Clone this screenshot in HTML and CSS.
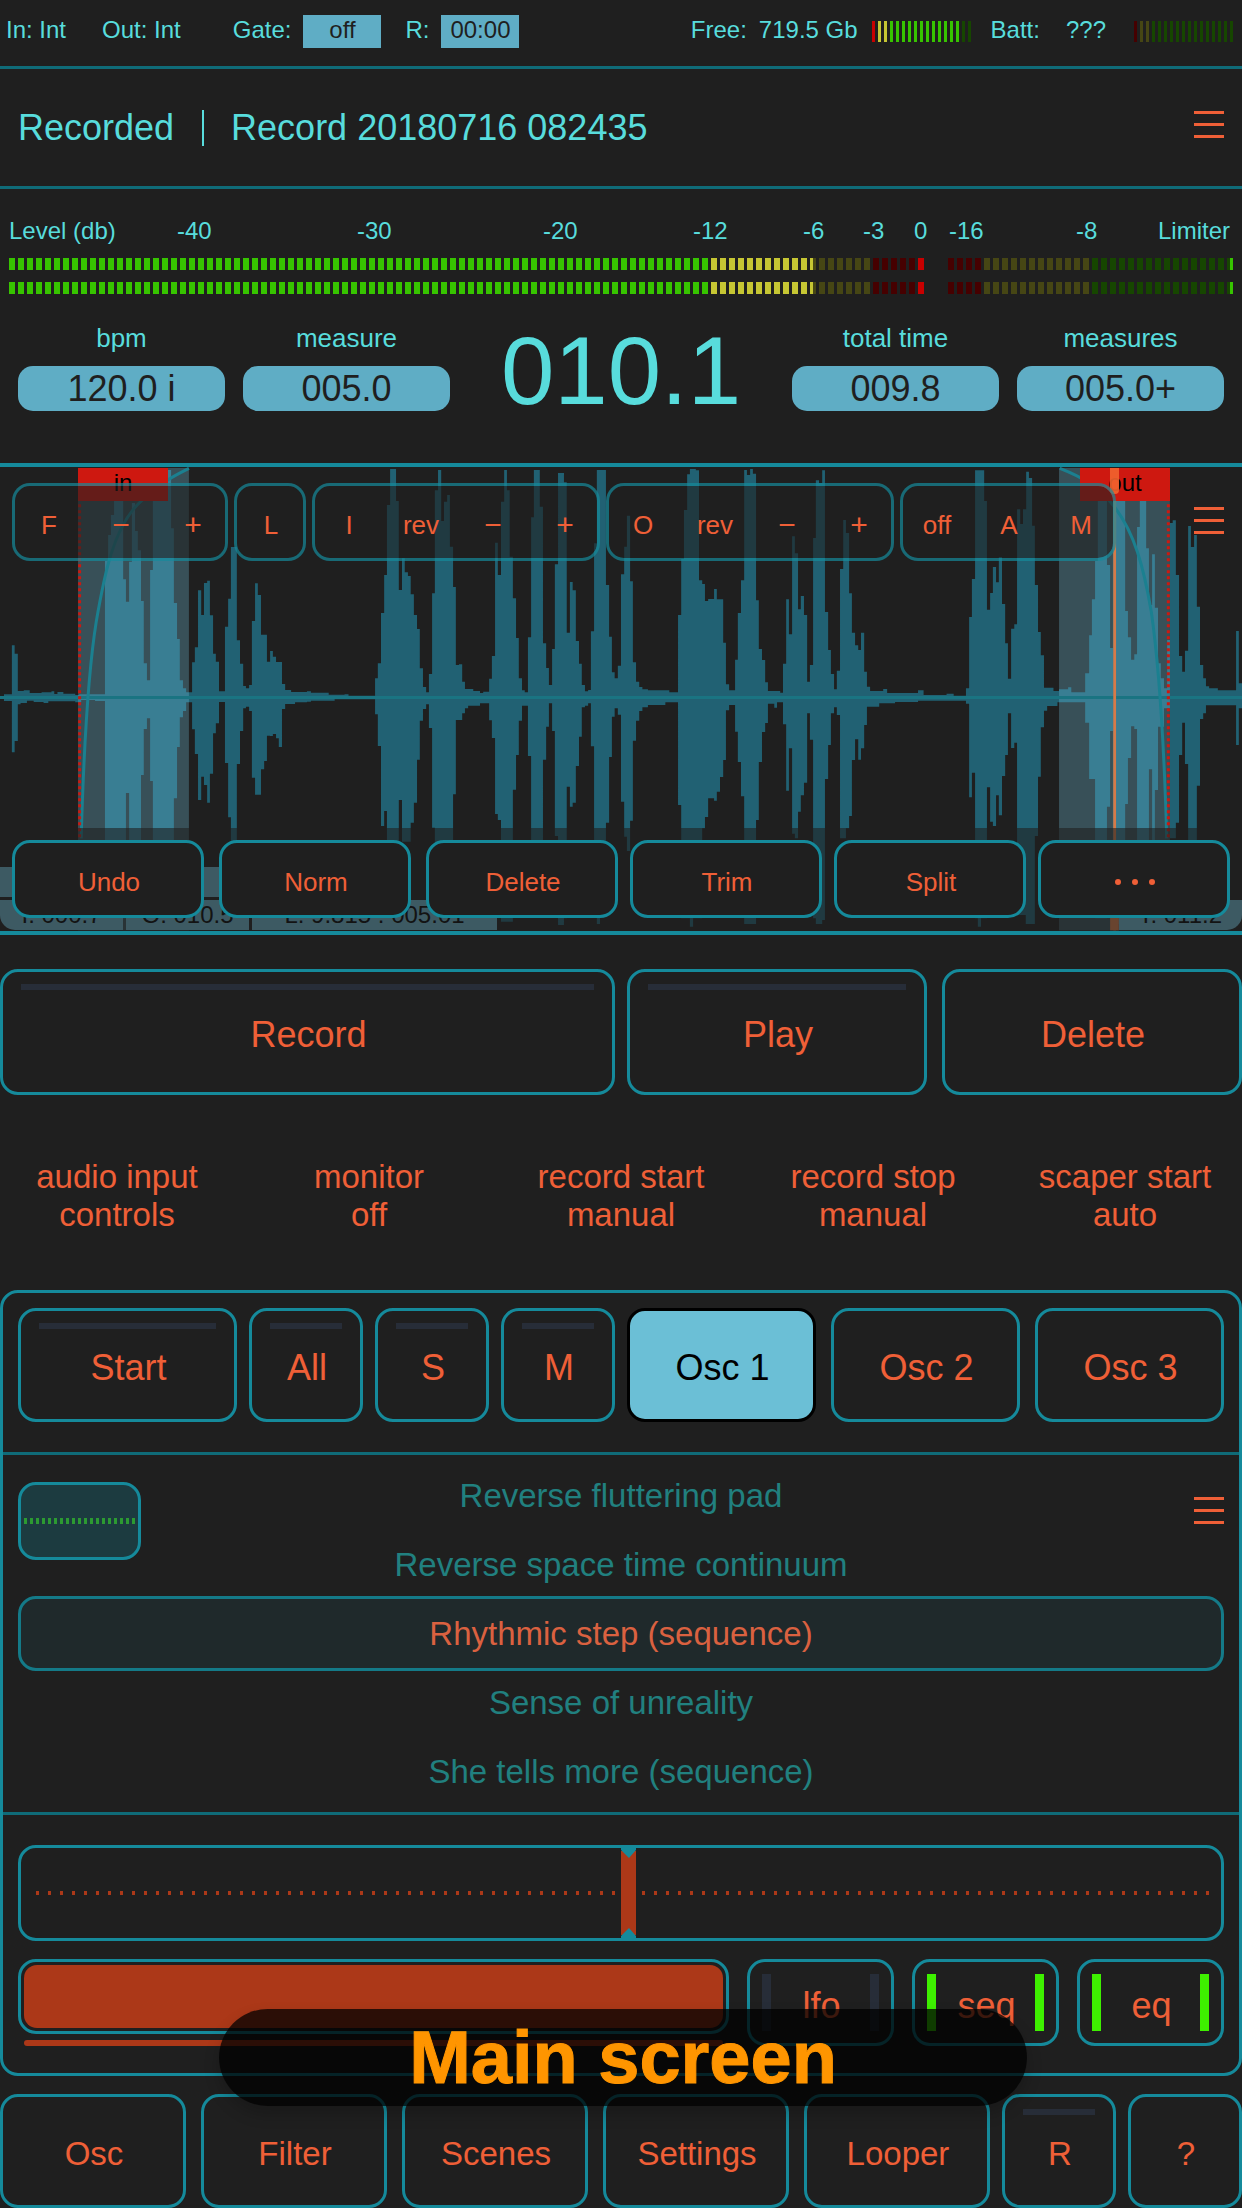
FILE: index.html
```html
<!DOCTYPE html>
<html lang="en">
<head>
<meta charset="utf-8">
<meta name="viewport" content="width=device-width, initial-scale=1">
<title>Main screen</title>
<link rel="stylesheet" href="styles.css">
</head>
<body>
<main class="page">

  <header class="status">
    <div class="status-left">
      <span class="io-in">In: Int</span>
      <span class="io-out">Out: Int</span>
      <span class="gate-label" id="gate-label">Gate:</span>
      <button class="chip" aria-labelledby="gate-label">off</button>
      <span class="rec-label">R:</span>
      <span class="chip">00:00</span>
    </div>
    <div class="status-right">
      <span>Free:</span>
      <span class="free-value">719.5 Gb</span>
      <span class="mini-meter mini-free"></span>
      <span class="batt-label">Batt:</span>
      <span class="batt-value">???</span>
      <span class="mini-meter mini-batt"></span>
    </div>
  </header>

  <div class="title-bar">
    <span>Recorded</span>
    <span class="title-divider"></span>
    <span>Record 20180716 082435</span>
    <button class="menu" aria-label="Menu"><i></i><i></i><i></i></button>
  </div>

  <section class="levels">
    <div class="scale">
      <span>Level (db)</span><span>-40</span><span>-30</span><span>-20</span><span>-12</span><span>-6</span><span>-3</span><span>0</span><span>-16</span><span>-8</span><span class="scale-end">Limiter</span>
    </div>
    <div class="meter-grid">
      <div class="meter meter-level"></div><div class="meter meter-limiter"></div>
      <div class="meter meter-level"></div><div class="meter meter-limiter"></div>
    </div>
    <div class="tempo">
      <div class="readout"><span>bpm</span><button class="pill">120.0 i</button></div>
      <div class="readout"><span>measure</span><button class="pill">005.0</button></div>
      <div class="position">010.1</div>
      <div class="readout"><span>total time</span><button class="pill">009.8</button></div>
      <div class="readout"><span>measures</span><button class="pill">005.0+</button></div>
    </div>
  </section>

  <section class="editor">
    <svg class="wave" viewBox="0 36 3136 1392" preserveAspectRatio="none" aria-hidden="true">
      <g fill="#216173">
        <path d="M0 728V724H10V718H30V571H37V596H45V708H60V706H75V714H105V712H130V709H137V717H145V711H160V716H190V720H200V718H265V318H273V240H280V180H288V80H311V373H318V440H326V320H333V144H341V228H348V286H356V438H363V625H371V676H379V345H386V70H424V45H432V220H439V444H447V552H454V676H462V700H470V712H485V622H492V577H500V406H508V480H515V384H523V377H530V481H538V596H545V620H553V709H568V515H576V431H583V276H598V556H606V626H614V693H621V700H629V690H636V498H644V385H651V420H659V539H674V620H682V588H689V605H697V621H712V687H720V705H735V711H775V709H785V713H830V719H870V718H880V722H947V670H954V625H962V474H970V360H977V150H985V42H1000V138H1007V405H1015V310H1022V352H1030V363H1037V418H1045V480H1053V522H1060V640H1068V696H1076V712H1083V657H1091V415H1098V106H1106V45H1114V198H1121V140H1129V120H1136V275H1144V396H1151V630H1159V628H1167V680H1174V702H1195V708H1212V714H1220V710H1235V671H1242V603H1250V263H1257V360H1265V140H1273V45H1280V106H1287V305H1295V430H1303V549H1310V670H1318V706H1325V712H1333V547H1341V187H1348V45H1363V155H1371V565H1379V639H1386V690H1394V582H1401V328H1409V54H1424V82H1431V533H1439V381H1446V406H1454V558H1462V626H1469V690H1477V709H1485V705H1492V529H1500V265H1507V45H1530V390H1538V545H1545V652H1552V670H1560V632H1568V358H1576V275H1583V182H1591V379H1598V622H1606V680H1614V696H1622V703H1636V706H1690V712H1712V480H1720V312H1727V165H1735V58H1742V42H1757V46H1765V376H1773V387H1780V438H1788V432H1803V402H1810V433H1826V563H1833V688H1841V706H1856V614H1863V474H1871V376H1879V45H1886V60H1894V42H1901V56H1909V436H1916V582H1924V615H1932V682H1939V708H1970V713H1977V626H1985V433H1992V538H2000V244H2007V295H2015V463H2022V423H2030V480H2038V680H2045V630H2053V249H2060V76H2068V84H2076V46H2083V471H2091V585H2098V657H2106V703H2113V647H2121V342H2129V195H2136V234H2144V415H2151V533H2159V571H2167V585H2174V533H2182V650H2189V695H2197V708H2230V702H2240V714H2318V706H2332V720H2390V716H2408V722H2439V700H2447V486H2454V372H2462V46H2485V138H2492V464H2500V414H2507V336H2515V382H2522V306H2530V447H2538V565H2545V671H2553V521H2561V508H2568V163H2576V207H2583V163H2591V50H2598V69H2606V212H2613V390H2621V531H2628V601H2636V698H2660V708H2674V703H2697V697H2705V712H2740V655H2750V541H2757V433H2765V318H2772V138H2795V330H2803V579H2810V60H2841V468H2848V547H2856V614H2864V598H2871V216H2878V138H2894V280H2901V450H2909V298H2916V458H2924V625H2931V670H2939V700H2947V555H2954V204H2961V196H2969V360H2977V603H2985V650H2992V587H3000V213H3007V276H3015V240H3022V455H3030V630H3038V670H3045V694H3053V700H3075V706H3121V528H3128V685H3136V728Z"/>
        <path d="M0 728V732H10V738H30V892H37V858H45V748H52V744H68V737H85V741H110V744H122V739H190V742H205V735H240V738H265V1390H318V1014H326V1390H356V960H363V822H371V790H379V978H386V1390H439V1030H447V876H454V787H462V768H470V742H485V823H492V897H500V1035H508V965H515V990H523V1043H530V956H538V835H545V805H553V741H568V924H576V1087H583V1180H598V927H606V828H614V760H621V755H629V768H636V968H644V1019H659V943H667V918H674V842H682V843H689V837H697V850H704V876H712V762H720V747H745V742H775V740H785V737H845V733H947V778H954V873H962V1113H970V1068H977V1390H1007V1035H1015V1160H1037V1103H1045V1043H1053V914H1060V797H1068V762H1076V748H1083V819H1091V1118H1098V1411H1121V1390H1144V1018H1151V795H1167V775H1174V760H1182V752H1212V745H1235V796H1242V849H1250V1077H1257V1095H1265V1400H1295V1004H1303V900H1310V797H1318V752H1333V903H1341V1380H1371V914H1379V815H1386V745H1394V828H1401V1143H1409V1410H1424V1390H1431V995H1439V1055H1446V1043H1454V933H1462V845H1469V757H1477V752H1485V745H1492V874H1500V1380H1507V1407H1515V1380H1530V1103H1538V906H1545V785H1552V760H1560V779H1568V1040H1576V1145H1583V1188H1591V1097H1598V857H1606V797H1614V768H1622V757H1636V750H1680V742H1712V1050H1720V1390H1742V1415H1750V1390H1773V1120H1780V1086H1788V1030H1803V1037H1810V1010H1818V966H1826V915H1833V766H1841V750H1856V830H1863V921H1871V1024H1879V1407H1909V1095H1916V921H1924V831H1932V804H1939V746H1955V758H1962V742H1977V808H1985V1007H1992V880H2000V1136H2007V1150H2015V1070H2022V1021H2030V983H2038V775H2045V854H2053V1390H2060V1407H2076V1395H2083V972H2091V870H2098V775H2106V757H2113V780H2121V1150H2136V1120H2144V1083H2151V915H2159V853H2167V914H2174V880H2182V810H2189V755H2220V745H2260V741H2318V737H2439V746H2447V1027H2454V953H2462V1390H2469V1415H2477V1390H2492V997H2500V1100H2507V1113H2515V1021H2522V1081H2530V963H2538V900H2545V775H2553V879H2561V863H2568V1380H2590V1407H2613V1143H2621V965H2628V817H2636V767H2644V753H2670V742H2740V803H2750V972H2765V1390H2795V1055H2803V828H2810V1407H2841V1047H2848V909H2856V814H2864V822H2871V1390H2901V943H2909V1160H2916V1005H2924V815H2939V760H2954V1150H2969V1103H2977V900H2985V803H2992V927H3000V1160H3022V992H3030V792H3038V775H3045V751H3121V870H3128V760H3136V728Z"/>
      </g>
      <rect x="197" y="39" width="280" height="1387" fill="#75c8e4" fill-opacity=".29"/>
      <rect x="2674" y="39" width="280" height="1387" fill="#75c8e4" fill-opacity=".29"/>
      <rect x="0" y="723" width="3136" height="9" fill="#1a7482"/>
      <g fill="none" stroke="#1b8090" stroke-width="3">
        <path vector-effect="non-scaling-stroke" d="M205 1150C212 860 224 640 243 500C262 370 285 215 355 140C390 95 430 68 477 40"/>
        <path vector-effect="non-scaling-stroke" d="M2676 40C2730 65 2775 95 2810 150C2865 230 2888 340 2907 470C2930 660 2940 900 2946 1150"/>
      </g>
      <g stroke="#ce1810" stroke-width="3" stroke-dasharray="3 3">
        <path vector-effect="non-scaling-stroke" d="M201 148V1426"/>
        <path vector-effect="non-scaling-stroke" d="M2950 148V1426"/>
      </g>
      <rect x="2811" y="39" width="7" height="1387" fill="#d67a48"/>
      <rect x="2803" y="1380" width="22" height="46" fill="#d67a48"/>
    </svg>
    <span class="marker marker-in">in</span>
    <span class="marker marker-out">out</span>
    <span class="playhead"></span>
    <div class="info info-format"></div>
    <div class="info info-range"><span>I: 000.7</span><span>O: 010.5</span><span class="info-length">L: 9.815 : 005.01</span></div>
    <div class="info info-time">T: 011.2</div>

    <div class="tools">
      <div class="tool-group"><button>F</button><button class="sign">−</button><button class="sign">+</button></div>
      <div class="tool-group"><button>L</button></div>
      <div class="tool-group"><button>I</button><button>rev</button><button class="sign">−</button><button class="sign">+</button></div>
      <div class="tool-group"><button>O</button><button>rev</button><button class="sign">−</button><button class="sign">+</button></div>
      <div class="tool-group"><button>off</button><button>A</button><button>M</button></div>
      <button class="menu menu-editor" aria-label="Editor menu"><i></i><i></i><i></i></button>
    </div>
    <div class="edit-actions">
      <div class="edit-left">
        <button class="btn">Undo</button>
        <button class="btn">Norm</button>
        <button class="btn">Delete</button>
      </div>
      <div class="edit-right">
        <button class="btn">Trim</button>
        <button class="btn">Split</button>
        <button class="btn" aria-label="More">
          <svg width="42" height="8" viewBox="0 0 42 8" fill="#ef5f37"><circle cx="4" cy="4" r="3"/><circle cx="21" cy="4" r="3"/><circle cx="38" cy="4" r="3"/></svg>
        </button>
      </div>
    </div>
  </section>

  <section class="halves transport">
    <button class="btn led">Record</button>
    <div class="pair">
      <button class="btn led">Play</button>
      <button class="btn">Delete</button>
    </div>
  </section>

  <section class="options">
    <button>audio input<br>controls</button>
    <button>monitor<br>off</button>
    <button>record start<br>manual</button>
    <button>record stop<br>manual</button>
    <button>scaper start<br>auto</button>
  </section>

  <section class="panel">
    <div class="halves osc-row">
      <div class="modes">
        <button class="btn led">Start</button>
        <button class="btn led">All</button>
        <button class="btn led">S</button>
        <button class="btn led">M</button>
      </div>
      <div class="trio">
        <button class="btn active" aria-pressed="true">Osc 1</button>
        <button class="btn">Osc 2</button>
        <button class="btn">Osc 3</button>
      </div>
    </div>

    <div class="presets">
      <ul class="preset-list">
        <li><button>Reverse fluttering pad</button></li>
        <li><button>Reverse space time continuum</button></li>
        <li class="selected"><button>Rhythmic step (sequence)</button></li>
        <li><button>Sense of unreality</button></li>
        <li><button>She tells more (sequence)</button></li>
      </ul>
      <div class="scope"></div>
      <button class="menu menu-presets" aria-label="Preset menu"><i></i><i></i><i></i></button>
    </div>

    <div class="controls">
      <input class="slider" type="range" min="0" max="1000" value="506" aria-label="Detune">
      <div class="mix">
        <div class="volume">
          <div class="volume-box"><div class="volume-fill"></div></div>
          <div class="volume-line"></div>
        </div>
        <button class="btn sided">lfo</button>
        <button class="btn sided on">seq</button>
        <button class="btn sided on">eq</button>
      </div>
    </div>
  </section>

  <nav class="tabs">
    <div class="tabs-main">
      <button class="btn">Osc</button>
      <button class="btn">Filter</button>
      <button class="btn">Scenes</button>
      <button class="btn">Settings</button>
      <button class="btn">Looper</button>
    </div>
    <button class="btn led">R</button>
    <button class="btn">?</button>
  </nav>

  <div class="toast">Main screen</div>
</main>
</body>
</html>
```
FILE: styles.css
```css
:root {
  --bg: #1f1f1f;
  --cyan: #58dcdc;
  --teal: #158a9b;
  --rule: #0f6b78;
  --orange: #ef5f37;
  --rust: #ac3818;
  --chip: #5fadc5;
  --led-off: #272d38;
}

* { box-sizing: border-box; }

body {
  margin: 0;
  background: var(--bg);
  color: var(--cyan);
  font: 24px/30px "Liberation Sans", Arial, sans-serif;
}

button {
  margin: 0;
  padding: 0;
  border: 0;
  background: none;
  color: var(--orange);
  font: inherit;
}

.page { position: relative; overflow: hidden; }

/* Status bar */
.status {
  display: flex;
  justify-content: space-between;
  padding: 15px 9px 18px 6px;
  border-bottom: 3px solid var(--rule);
  white-space: nowrap;
}
.status-left, .status-right { display: flex; height: 33px; }
.io-out { margin-left: 36px; }
.gate-label { margin-left: 52px; }
.rec-label { margin-left: 24px; }
.chip {
  width: 78px;
  height: 33px;
  margin-left: 12px;
  padding-bottom: 3px;
  background: var(--chip);
  color: var(--bg);
  text-align: center;
}
.free-value { margin-left: 12px; }
.batt-label { margin-left: 20px; }
.batt-value { margin-left: 26px; }
.mini-meter {
  width: 99px;
  height: 21px;
  margin: 6px 0 0 14px;
}
.mini-free {
  background:
    repeating-linear-gradient(90deg, transparent 0 3px, var(--bg) 3px 6px),
    linear-gradient(90deg, #c80000 6px, #c6c633 6px 18px, #37c400 18px 90px, #164600 90px);
}
.mini-batt {
  margin-left: 28px;
  background:
    repeating-linear-gradient(90deg, transparent 0 3px, var(--bg) 3px 6px),
    linear-gradient(90deg, #460000 6px, #464614 6px 18px, #164600 18px);
}

/* Title */
.title-bar {
  display: flex;
  align-items: center;
  height: 120px;
  padding: 0 18px;
  border-bottom: 3px solid var(--rule);
  font-size: 36px;
  line-height: 40px;
}
.title-divider {
  width: 2px;
  height: 36px;
  margin: 0 27px 0 28px;
  background: var(--cyan);
}
.menu {
  display: flex;
  flex-direction: column;
  gap: 9px;
  width: 30px;
  margin-left: auto;
  padding-bottom: 6px;
}
.menu i { height: 3px; background: var(--orange); }

/* Level meters */
.levels { padding: 28px 9px 52px; }
.scale {
  display: grid;
  grid-template-columns: 168fr 180fr 186fr 150fr 110fr 60fr 51fr 35fr 127fr 73fr 84fr;
  height: 41px;
  line-height: 28px;
  white-space: nowrap;
}
.scale span { min-width: 0; }
.scale .scale-end { padding-right: 3px; text-align: right; }
.meter-grid {
  display: grid;
  grid-template-columns: 918fr 285fr;
  gap: 12px 21px;
}
.meter { height: 12px; }
.meter-level {
  background:
    repeating-linear-gradient(90deg, transparent 0 6px, var(--bg) 6px 9px),
    linear-gradient(90deg, #37c400 76.4%, #c6c633 76.4% 87.6%, #464614 87.6% 94%, #460000 94% 98.9%, #c80000 98.9%);
}
.meter-limiter {
  background:
    repeating-linear-gradient(90deg, transparent 0 6px, var(--bg) 6px 9px),
    linear-gradient(90deg, #460000 12.5%, #464614 12.5% 50.2%, #164600 50.2% 99%, #37c400 99%);
}

.tempo {
  display: grid;
  grid-template-columns: 207fr 207fr 306fr 207fr 207fr;
  gap: 18px;
  margin: 29px 9px 0;
}
.readout {
  display: flex;
  flex-direction: column;
  gap: 13px;
  font-size: 26px;
  text-align: center;
}
.pill {
  height: 45px;
  border-radius: 15px;
  background: var(--chip);
  color: var(--bg);
  font-size: 36px;
  line-height: 45px;
}
.position {
  height: 88px;
  font-size: 96px;
  line-height: 96px;
  text-align: center;
}

/* Waveform editor */
.editor {
  position: relative;
  display: flex;
  flex-direction: column;
  justify-content: space-between;
  height: 472px;
  border: solid var(--teal);
  border-width: 4px 0;
}
.wave { position: absolute; inset: 0; width: 100%; height: 100%; }
.marker {
  position: absolute;
  top: 1px;
  width: 90px;
  height: 33px;
  background: #ce1810;
  color: #000;
  text-align: center;
}
.marker-in { left: 78px; }
.marker-out { right: 72px; }
.playhead {
  position: absolute;
  top: 1px;
  right: 123px;
  width: 9px;
  height: 26px;
  border-radius: 0 0 4px 4px;
  background: rgba(242, 100, 47, .9);
}
.info {
  position: absolute;
  bottom: 1px;
  height: 30px;
  color: #000;
  white-space: nowrap;
}
.info-format { left: 0; bottom: 34px; width: 320px; background: #6ab2c9; }
.info-range { left: 0; display: flex; gap: 3px; text-align: center; }
.info-range span { width: 123px; background: #6ab2c9; }
.info-range span:first-child { border-bottom-left-radius: 15px; }
.info-range .info-length { width: 245px; }
.info-time {
  right: 0;
  width: 123px;
  padding-right: 20px;
  border-bottom-right-radius: 15px;
  background: #6ab2c9;
  text-align: right;
}

.tools {
  position: relative;
  display: flex;
  gap: 6px;
  padding: 16px 18px 0 12px;
  font-size: 26px;
}
.tool-group {
  display: flex;
  height: 78px;
  border: 3px solid rgba(21, 138, 155, .7);
  border-radius: 18px;
  background: rgba(31, 31, 31, .6);
  background-clip: padding-box;
}
.tool-group button { width: 72px; padding: 6px 0 0 2px; }
.tool-group button:first-child { margin-left: -3px; }
.tool-group button:last-child { margin-right: -3px; }
.tool-group .sign { font-size: 30px; }

.menu-editor { height: 33px; margin-top: 24px; }

.edit-actions {
  position: relative;
  display: grid;
  grid-template-columns: 606fr 600fr;
  gap: 12px;
  padding: 12px 12px 13px;
  background: rgba(31, 31, 31, .6);
}
.edit-left, .edit-right {
  display: grid;
  grid-template-columns: repeat(3, 1fr);
  gap: 15px;
}
.edit-right { gap: 12px; }
.edit-actions .btn { height: 78px; font-size: 26px; }

/* Buttons */
.btn {
  position: relative;
  display: flex;
  align-items: center;
  justify-content: center;
  min-width: 0;
  padding: 6px 0 0 2px;
  border: 3px solid var(--teal);
  border-radius: 18px;
  background: var(--bg);
  font-size: 36px;
  line-height: 40px;
}
.btn.active { border-color: #000; background: #6bbfd6; color: #000; }
.led::before {
  content: "";
  position: absolute;
  top: 12px;
  right: 18px;
  left: 18px;
  height: 6px;
  background: var(--led-off);
}
.sided::before, .sided::after {
  content: "";
  position: absolute;
  top: 12px;
  bottom: 12px;
  width: 9px;
  background: var(--led-off);
}
.sided::before { left: 12px; }
.sided::after { right: 12px; }
.sided.on::before, .sided.on::after { background: #3ef000; }

.halves { display: grid; grid-template-columns: 1fr 1fr; gap: 12px; }
.pair { display: grid; grid-template-columns: 1fr 1fr; gap: 15px; }
.trio { display: grid; grid-template-columns: 1fr 1fr 1fr; gap: 15px; }
.modes { display: grid; grid-template-columns: 219fr 114fr 114fr 114fr; gap: 12px; }

.transport { height: 126px; margin-top: 34px; }

.options {
  display: grid;
  grid-template-columns: repeat(5, 1fr);
  gap: 18px;
  margin: 63px 0 56px;
  font-size: 33px;
  line-height: 38px;
}

/* Oscillator panel */
.panel {
  border: 3px solid var(--teal);
  border-radius: 18px;
}
.osc-row { height: 159px; padding: 15px 15px 30px; }

.presets {
  display: grid;
  padding: 6px 15px;
  border: solid var(--rule);
  border-width: 3px 0;
  font-size: 33px;
}
.preset-list, .scope, .menu-presets { grid-area: 1 / 1; }
.preset-list { margin: 0; padding: 0; list-style: none; }
.preset-list li { height: 69px; }
.preset-list button {
  width: 100%;
  height: 69px;
  color: #21807f;
}
.preset-list .selected {
  height: 75px;
  margin: -3px 0;
  border: 3px solid #147a88;
  border-radius: 18px;
  background: #1f292b;
}
.preset-list .selected button { color: #da6140; }
.scope {
  width: 123px;
  height: 78px;
  margin-top: 21px;
  border: 3px solid var(--teal);
  border-radius: 18px;
  background:
    repeating-linear-gradient(90deg, #2c9a32 0 3px, transparent 3px 6px) center 33px / 111px 6px no-repeat,
    #1c3b40;
}
.menu-presets { height: 33px; margin-top: 36px; }

.controls { display: grid; gap: 18px; padding: 30px 15px 27px; }
.slider {
  -webkit-appearance: none;
  appearance: none;
  width: 100%;
  height: 96px;
  margin: 0;
  border: 3px solid var(--teal);
  border-radius: 18px;
  background:
    repeating-linear-gradient(90deg, var(--rust) 0 3px, transparent 3px 12px) left 15px center / calc(50% - 15px) 4px no-repeat,
    repeating-linear-gradient(270deg, var(--rust) 0 3px, transparent 3px 12px) right 12px center / calc(50% - 30px) 4px no-repeat;
}
.slider::-webkit-slider-thumb {
  -webkit-appearance: none;
  width: 15px;
  height: 90px;
  border: 0;
  background: url('data:image/svg+xml,<svg xmlns="http://www.w3.org/2000/svg" width="15" height="90"><path fill="%23ac3818" d="M0 3h15v84H0z"/><path fill="%23158a9b" d="M0 0h15v2l-7 8l-8-8zM0 90h15v-2l-7-8l-8 8z"/></svg>');
}

.mix { display: grid; grid-template-columns: 711fr 147fr 147fr 147fr; gap: 18px; height: 87px; }
.volume { display: flex; flex-direction: column; justify-content: space-between; }
.volume-box {
  height: 75px;
  padding: 3px;
  border: 3px solid var(--teal);
  border-radius: 18px;
}
.volume-fill { height: 100%; border-radius: 13px; background: var(--rust); }
.volume-line { height: 6px; margin: 0 6px; border-radius: 3px; background: var(--rust); }

/* Bottom tabs */
.tabs {
  display: grid;
  grid-template-columns: 990fr 114fr 114fr;
  gap: 12px;
  height: 114px;
  margin-top: 18px;
}
.tabs-main { display: grid; grid-template-columns: repeat(5, 1fr); gap: 15px; }
.tabs .btn { font-size: 33px; }

.toast {
  position: absolute;
  right: 215px;
  bottom: 102px;
  left: 219px;
  border-radius: 49px;
  background: rgba(0, 0, 0, .75);
  box-shadow: 0 8px 16px rgba(0, 0, 0, .2);
  color: #ff9500;
  font-size: 74px;
  font-weight: bold;
  line-height: 97px;
  text-align: center;
  -webkit-text-stroke: 1px #ff9500;
}
```
